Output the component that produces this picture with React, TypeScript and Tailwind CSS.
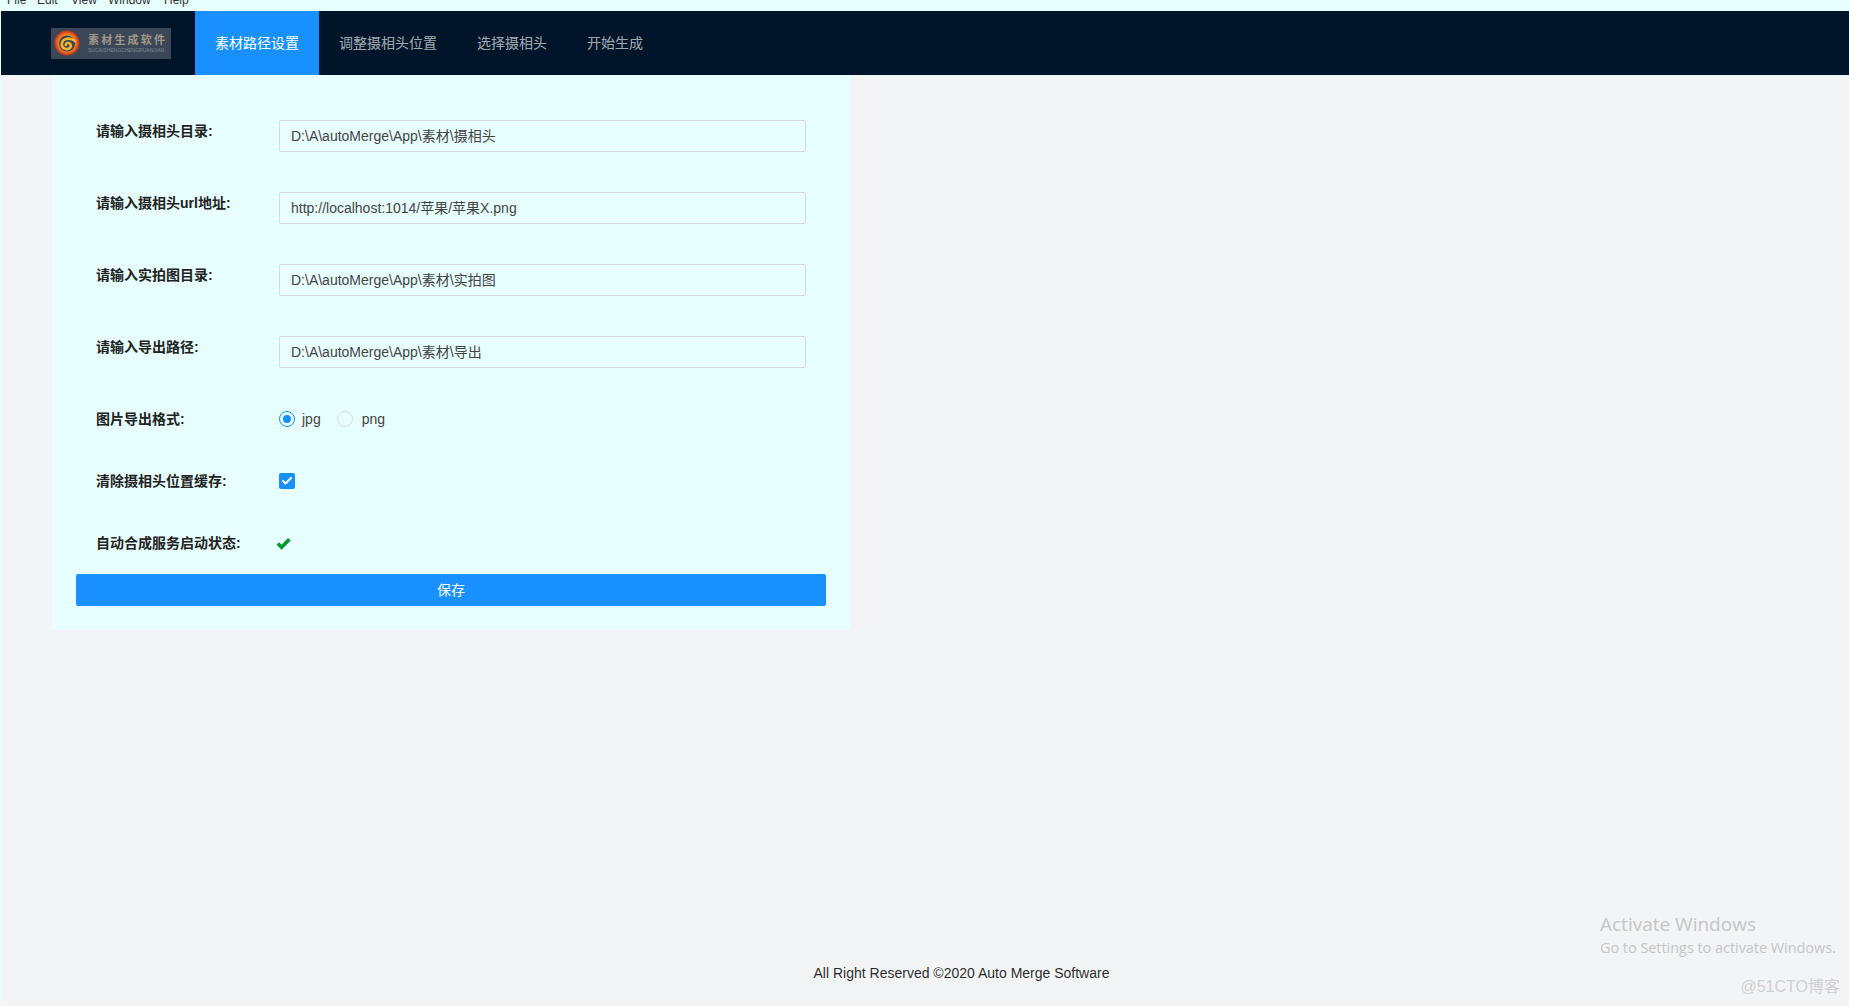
import { Check } from "lucide-react"

const menus = ["File", "Edit", "View", "Window", "Help"]
const tabs = ["素材路径设置", "调整摄相头位置", "选择摄相头", "开始生成"]
const fields = [
  { label: "请输入摄相头目录:", value: "D:\\A\\autoMerge\\App\\素材\\摄相头" },
  { label: "请输入摄相头url地址:", value: "http://localhost:1014/苹果/苹果X.png" },
  { label: "请输入实拍图目录:", value: "D:\\A\\autoMerge\\App\\素材\\实拍图" },
  { label: "请输入导出路径:", value: "D:\\A\\autoMerge\\App\\素材\\导出" },
]

const Logo = () => (
  <div className="flex items-center w-[120px] h-[31px] bg-[#3b4757] pl-[3px] mr-[24px] overflow-hidden">
    <svg width="26" height="26" viewBox="0 0 26 26" className="shrink-0">
      <defs>
        <radialGradient id="swirl" cx="50%" cy="50%" r="50%">
          <stop offset="55%" stopColor="#f29a22" />
          <stop offset="80%" stopColor="#e8601f" />
          <stop offset="100%" stopColor="#b8331f" />
        </radialGradient>
      </defs>
      <circle cx="13" cy="13" r="12.5" fill="url(#swirl)" />
      <circle cx="13" cy="13.5" r="8" fill="#3b4757" />
      <path
        d="M21 11 C17 7.5 8.5 7.5 7.8 14 C7.5 18.5 13 20.5 16 17.8 C18 15.8 16.5 12.5 13.5 13 C12.4 13.2 11.8 14 11.8 15"
        fill="none"
        stroke="#f3b42a"
        strokeWidth="2.6"
        strokeLinecap="round"
      />
    </svg>
    <div className="ml-[8px] flex flex-col items-start">
      <span className="text-[11px] leading-[13px] tracking-[2.2px] font-bold text-[#a3968a] whitespace-nowrap">
        素材生成软件
      </span>
      <span className="text-[5px] leading-[6px] text-[#7f8794] whitespace-nowrap">SUCAISHENGCHENGRUANJIAN</span>
    </div>
  </div>
)

const Row = ({ label, children }: { label: string; children: React.ReactNode }) => (
  <div className="flex items-start mb-[40px] pl-[20px]">
    <label className="w-[183px] shrink-0 leading-[22px] font-semibold text-[#222222]">{label}</label>
    {children}
  </div>
)

export default function App() {
  return (
    <div className="flex flex-col h-screen bg-[#e8ffff] pl-px text-sm font-['Liberation_Sans','Noto_Sans_CJK_SC',sans-serif]">
      <div className="flex items-end h-[11px] pb-[5px] overflow-hidden text-xs leading-none text-[#333333]">
        <span className="w-[36px] pl-[6px]">{menus[0]}</span>
        <span className="w-[34px]">{menus[1]}</span>
        <span className="w-[37px]">{menus[2]}</span>
        <span className="w-[56px]">{menus[3]}</span>
        <span>{menus[4]}</span>
      </div>

      <header className="flex items-center h-[64px] bg-[#001529] pl-[50px]">
        <Logo />
        {tabs.map((t, idx) => (
          <div
            key={t}
            className={`flex items-center h-full px-[20px] ${idx === 0 ? "bg-[#1890ff] text-white" : "text-[#ffffffa6]"}`}
          >
            {t}
          </div>
        ))}
      </header>

      <main className="flex-1 bg-[#f3f4f6] pl-[51px]">
        <div className="w-[798px] bg-[#e8ffff] px-[24px] pt-[45px] pb-[24px]">
          {fields.map((f) => (
            <Row key={f.label} label={f.label}>
              <input
                readOnly
                value={f.value}
                className="w-[527px] h-[32px] px-[11px] pb-[2px] border border-[#d9d9d9] rounded-[2px] text-[#444444] bg-transparent outline-none"
              />
            </Row>
          ))}

          <Row label="图片导出格式:">
            <div className="flex items-center h-[22px] text-[#444444]">
              <span className="flex items-center justify-center w-[16px] h-[16px] rounded-full border border-[#1890ff]">
                <span className="w-[8px] h-[8px] rounded-full bg-[#1890ff]" />
              </span>
              <span className="ml-[7px] mr-[16px]">jpg</span>
              <span className="w-[16px] h-[16px] rounded-full border border-[#d9d9d9]" />
              <span className="ml-[9px]">png</span>
            </div>
          </Row>

          <Row label="清除摄相头位置缓存:">
            <div className="flex items-center h-[22px]">
              <span className="flex items-center justify-center w-[16px] h-[16px] rounded-[2px] bg-[#1890ff]">
                <Check size={12} strokeWidth={4} className="text-white" />
              </span>
            </div>
          </Row>

          <div className="flex items-start pl-[20px]">
            <label className="w-[180px] shrink-0 leading-[22px] font-semibold text-[#222222]">自动合成服务启动状态:</label>
            <div className="flex items-center h-[22px]">
              <svg width="15" height="13" viewBox="0 0 15 13">
                <path d="M1.8 6.5 L5.6 10.2 L13.4 2.2" fill="none" stroke="#00962f" strokeWidth="3.6" />
              </svg>
            </div>
          </div>

          <button className="block w-full h-[32px] mt-[20px] bg-[#1890ff] text-white rounded-[2px]">保存</button>
        </div>
      </main>

      <footer className="bg-[#f3f4f6] pl-[73px] pb-[22px] text-center leading-[22px] text-[#000000d9]">
        All Right Reserved ©2020 Auto Merge Software
      </footer>

      <div className="absolute left-[1600px] top-[911px] font-['Open_Sans',sans-serif] text-[#c4c6c8]">
        <div className="text-[19px] leading-[27px]">Activate Windows</div>
        <div className="text-[14.4px] leading-[20px]">Go to Settings to activate Windows.</div>
      </div>
      <div className="absolute right-[9px] top-[976px] text-base leading-[22px] text-[#cfd0d2]">@51CTO博客</div>
    </div>
  )
}
